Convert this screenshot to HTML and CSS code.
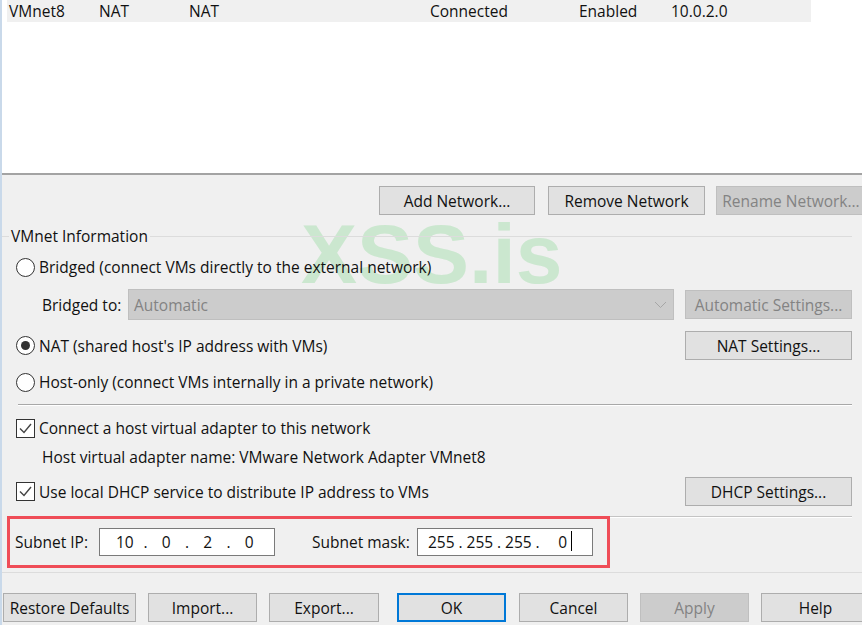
FILE: index.html
```html
<!DOCTYPE html>
<html lang="en">
<head>
    <meta charset="UTF-8">
    <title>Virtual Network Editor</title>
    <link rel="stylesheet" href="styles.css">
</head>
<body>
    <div class="window">
        <div class="watermark">XSS.is</div>

        <div class="net-list">
            <div class="net-row">
                <span>VMnet8</span>
                <span>NAT</span>
                <span>NAT</span>
                <span>Connected</span>
                <span>Enabled</span>
                <span>10.0.2.0</span>
            </div>
        </div>

        <div class="list-actions">
            <button class="btn add">Add Network...</button>
            <button class="btn remove">Remove Network</button>
            <button class="btn rename" disabled>Rename Network...</button>
        </div>

        <div class="group">
            <div class="group-title"><span>VMnet Information</span></div>

            <div class="row radio-row bridged-radio">
                <span class="radio"></span>Bridged (connect VMs directly to the external network)
            </div>

            <div class="row bridged-row">
                <div class="bridged-left">
                    <span class="bridged-label">Bridged to:</span>
                    <div class="select">
                        <span>Automatic</span>
                        <svg width="13" height="8" viewBox="0 0 13 8"><polyline points="1,1 6.5,6.5 12,1" fill="none" stroke="#a6a6a6" stroke-width="1"/></svg>
                    </div>
                </div>
                <button class="btn side" disabled>Automatic Settings...</button>
            </div>

            <div class="row nat-row">
                <div class="radio-row"><span class="radio checked"></span>NAT (shared host's IP address with VMs)</div>
                <button class="btn side">NAT Settings...</button>
            </div>

            <div class="row radio-row host-row">
                <span class="radio"></span>Host-only (connect VMs internally in a private network)
            </div>

            <div class="rule"></div>

            <div class="row check-row connect-row">
                <span class="check">
                    <svg width="17" height="17" viewBox="0 0 17 17"><polyline points="3,8.5 7,12.5 14,4" fill="none" stroke="#444" stroke-width="1.4"/></svg>
                </span>Connect a host virtual adapter to this network
            </div>
            <div class="row adapter-row">Host virtual adapter name: VMware Network Adapter VMnet8</div>

            <div class="row dhcp-row">
                <div class="check-row">
                    <span class="check">
                        <svg width="17" height="17" viewBox="0 0 17 17"><polyline points="3,8.5 7,12.5 14,4" fill="none" stroke="#444" stroke-width="1.4"/></svg>
                    </span>Use local DHCP service to distribute IP address to VMs
                </div>
                <button class="btn side">DHCP Settings...</button>
            </div>

            <div class="rule thin"></div>
        </div>

        <div class="subnet-box">
            <span class="subnet-label">Subnet IP:</span>
            <div class="ip-field">
                <span class="seg">10</span><span class="dot">.</span><span class="seg">0</span><span class="dot">.</span><span class="seg">2</span><span class="dot">.</span><span class="seg">0</span>
            </div>
            <span class="subnet-label mask">Subnet mask:</span>
            <div class="ip-field mask-field">
                <span class="seg">255</span><span class="dot">.</span><span class="seg">255</span><span class="dot">.</span><span class="seg">255</span><span class="dot">.</span><span class="seg">0<i class="caret"></i></span>
            </div>
        </div>

        <div class="footer-line"></div>

        <div class="footer">
            <button class="btn restore">Restore Defaults</button>
            <button class="btn">Import...</button>
            <button class="btn export">Export...</button>
            <button class="btn ok">OK</button>
            <button class="btn cancel">Cancel</button>
            <button class="btn" disabled>Apply</button>
            <button class="btn">Help</button>
        </div>
    </div>
</body>
</html>
```

FILE: styles.css
```css
* {
    margin: 0;
    padding: 0;
    box-sizing: border-box;
}

body {
    font-family: 'Open Sans', 'Noto Sans', sans-serif;
    font-size: 15.5px;
    color: #111;
    background: #f0f0f0;
    overflow: hidden;
}

.window {
    position: relative;
    height: 625px;
    border-left: 2px solid #c9d9ea;
    overflow: hidden;
}

.watermark {
    position: absolute;
    left: 299px;
    top: 221px;
    font-family: 'Liberation Sans', Arial, sans-serif;
    font-weight: bold;
    font-size: 84px;
    line-height: 0.8;
    color: #cbe7cf;
    z-index: 0;
    pointer-events: none;
}

/* network list */
.net-list {
    height: 175px;
    background: #fff;
    border-bottom: 2px solid #a3a3a3;
}

.net-row {
    display: grid;
    grid-template-columns: 90px 90px 241px 149px 92px 1fr;
    align-items: center;
    width: 804px;
    height: 22px;
    margin-left: 5px;
    padding-left: 2px;
    background: #f0f0f0;
    white-space: nowrap;
}

/* buttons */
.btn {
    font-family: inherit;
    font-size: 15.5px;
    color: #111;
    height: 29px;
    background: #e1e1e1;
    border: 1px solid #adadad;
    white-space: nowrap;
    text-align: center;
    flex-shrink: 0;
}

.btn:disabled {
    background: #cccccc;
    border-color: #bfbfbf;
    color: #838383;
}

.list-actions {
    display: flex;
    gap: 12px;
    padding-left: 377px;
    margin-top: 11px;
}

.list-actions .add { width: 156px; }
.list-actions .remove { width: 157px; margin-left: 1px; }
.list-actions .rename { width: 150px; margin-left: -1px; }

/* vmnet information */
.group {
    position: relative;
    z-index: 1;
    padding: 0 10px 0 0;
}

.group-title {
    display: flex;
    align-items: center;
    height: 18px;
    margin-top: 12px;
}

.group-title::before {
    content: '';
    width: 7px;
    border-top: 1px solid #dcdcdc;
    margin-right: 2px;
}

.group-title::after {
    content: '';
    flex: 1;
    border-top: 1px solid #dcdcdc;
    margin-left: 2px;
}

.row {
    display: flex;
    align-items: center;
    padding-left: 14px;
    white-space: nowrap;
}

.radio-row {
    display: flex;
    align-items: center;
}

.radio {
    width: 19px;
    height: 19px;
    border: 1.5px solid #333;
    border-radius: 50%;
    background: #fff;
    margin-right: 4px;
    display: flex;
    align-items: center;
    justify-content: center;
}

.radio.checked::after {
    content: '';
    width: 9px;
    height: 9px;
    border-radius: 50%;
    background: #333;
}

.bridged-radio {
    height: 30px;
    margin-top: 7px;
}

.bridged-row {
    height: 31px;
    margin-top: 7px;
    justify-content: space-between;
    gap: 11px;
}

.bridged-left {
    display: flex;
    align-items: center;
    flex: 1;
    height: 100%;
}

.bridged-label {
    width: 112px;
    padding-left: 26px;
}

.select {
    flex: 1;
    height: 31px;
    background: #cccccc;
    border: 1px solid #bfbfbf;
    color: #838383;
    display: flex;
    align-items: center;
    justify-content: space-between;
    padding: 0 6px 0 5px;
}

.btn.side {
    width: 167px;
}

.nat-row {
    height: 29px;
    margin-top: 11px;
    justify-content: space-between;
}

.host-row {
    height: 30px;
    margin-top: 7px;
}

.rule {
    margin: 7px 0 0 16px;
    border-top: 1px solid #a8a8a8;
    border-bottom: 1px solid #fff;
}

.rule.thin {
    margin-top: 10px;
    border-top-color: #c4c4c4;
}

.check-row {
    display: flex;
    align-items: center;
}

.check {
    width: 19px;
    height: 19px;
    border: 1px solid #333;
    background: #fff;
    margin-right: 4px;
    display: flex;
    align-items: center;
    justify-content: center;
}

.connect-row {
    height: 28px;
    margin-top: 8px;
}

.adapter-row {
    height: 28px;
    margin-top: 1px;
    padding-left: 40px;
}

.dhcp-row {
    height: 29px;
    margin-top: 6px;
    justify-content: space-between;
}

/* subnet */
.subnet-box {
    display: flex;
    align-items: center;
    width: 603px;
    height: 52px;
    margin: -2px 0 0 5px;
    padding-left: 5px;
    border: 3px solid #ef4d57;
    position: relative;
    z-index: 1;
}

.subnet-label {
    width: 84px;
}

.subnet-label.mask {
    width: 105px;
    margin-left: 37px;
}

.ip-field {
    display: flex;
    align-items: center;
    width: 176px;
    height: 28px;
    background: #fff;
    border: 1px solid #7a7a7a;
    padding: 0 8px;
}

.seg {
    width: 34px;
    text-align: center;
    position: relative;
}

.mask-field .seg {
    width: 31px;
}

.mask-field .seg:last-child {
    width: 43px;
}

.dot {
    width: 8px;
    text-align: center;
}

.caret {
    position: absolute;
    right: 12px;
    top: 0;
    width: 1px;
    height: 20px;
    background: #000;
}

.footer-line {
    margin-top: 4px;
    border-top: 1px solid #dcdcdc;
}

/* dialog buttons */
.footer {
    display: flex;
    gap: 12px;
    margin: 20px 0 0 1px;
}

.footer .btn {
    width: 109px;
}

.footer .btn.restore {
    width: 133px;
}

.footer .btn.export {
    width: 110px;
}

.footer .btn.ok {
    margin-left: 6px;
    border: 2px solid #0078d7;
}

.footer .btn.cancel {
    margin-left: 1px;
}
```
